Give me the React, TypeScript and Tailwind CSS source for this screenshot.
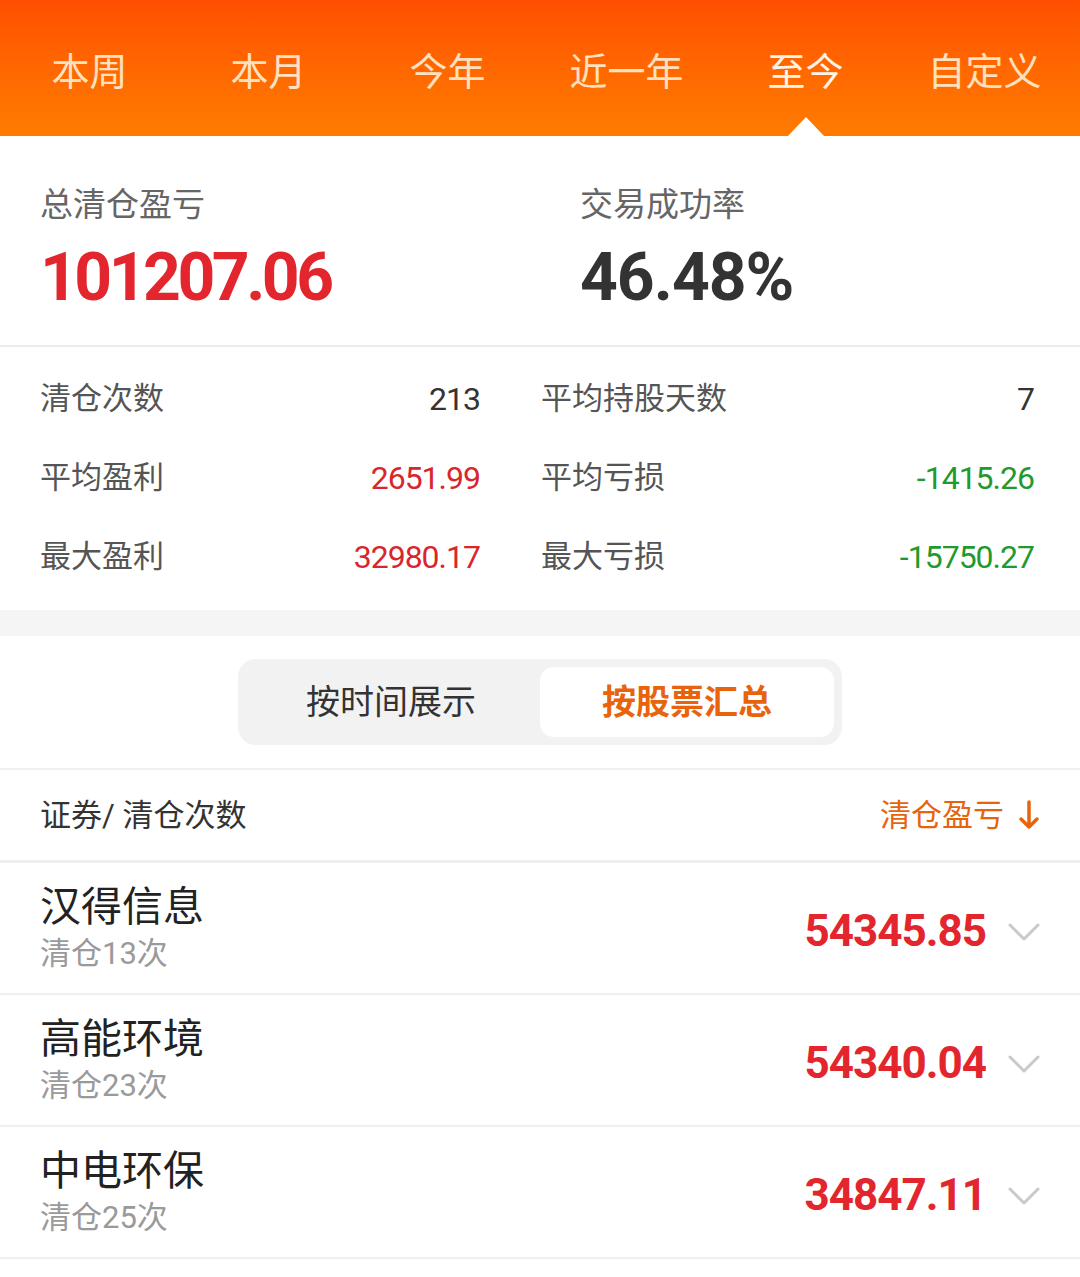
import React from "react";

const tabs = ["本周", "本月", "今年", "近一年", "至今", "自定义"];

const stats = [
  { l: "清仓次数", lv: "213", lc: "text-[#333333]", r: "平均持股天数", rv: "7", rc: "text-[#333333]" },
  { l: "平均盈利", lv: "2651.99", lc: "text-[#d9262c]", r: "平均亏损", rv: "-1415.26", rc: "text-[#1f9a2e]" },
  { l: "最大盈利", lv: "32980.17", lc: "text-[#d9262c]", r: "最大亏损", rv: "-15750.27", rc: "text-[#1f9a2e]" },
];

const stocks = [
  { name: "汉得信息", times: 13, value: "54345.85" },
  { name: "高能环境", times: 23, value: "54340.04" },
  { name: "中电环保", times: 25, value: "34847.11" },
];

const font = "font-['Roboto','Noto_Sans_CJK_SC',sans-serif]";

function Chevron() {
  return (
    <svg width="32" height="20" viewBox="0 0 32 20" fill="none">
      <path d="M2 3 L16 17 L30 3" stroke="#c9c9c9" strokeWidth="3" strokeLinecap="round" strokeLinejoin="round" />
    </svg>
  );
}

export default function App() {
  const [tab, setTab] = React.useState(4);
  const [mode, setMode] = React.useState(1);

  return (
    <div className={`w-[1080px] min-h-[1277px] bg-white ${font}`}>
      {/* period tabs */}
      <div className="h-[136px] bg-gradient-to-b from-[#ff4f00] to-[#ff7c00] grid grid-cols-6 pr-[6px]">
        {tabs.map((t, i) => (
          <button
            key={t}
            onClick={() => setTab(i)}
            className={`relative flex items-center justify-center pt-[8px] text-[38px] leading-none ${
              tab === i ? "text-[#fff4e6]" : "text-[#ffe0bf]"
            }`}
          >
            {t}
            {tab === i && (
              <span className="absolute bottom-0 left-1/2 -translate-x-1/2 w-0 h-0 border-l-[18px] border-r-[18px] border-b-[19px] border-l-transparent border-r-transparent border-b-white" />
            )}
          </button>
        ))}
      </div>

      {/* summary */}
      <div className="h-[211px] flex px-[40px] pt-[52px] border-b-[2px] border-[#ececec]">
        <div className="w-[540px] flex flex-col">
          <div className="text-[33px] leading-none text-[#666666]">总清仓盈亏</div>
          <div className="mt-[24px] text-[66px] leading-none font-bold tracking-[-3.5px] text-[#e3262d]">101207.06</div>
        </div>
        <div className="flex flex-col">
          <div className="text-[33px] leading-none text-[#666666]">交易成功率</div>
          <div className="mt-[24px] text-[66px] leading-none font-bold tracking-[-1px] text-[#333333]">46.48%</div>
        </div>
      </div>

      {/* stats */}
      <div className="pt-[12px] pb-[14px]">
        {stats.map((s) => (
          <div key={s.l} className="h-[79px] flex items-center px-[40px] text-[31px] leading-none">
            <div className="w-[440px] flex justify-between">
              <span className="text-[#555555]">{s.l}</span>
              <span className={`${s.lc} text-[32px] tracking-[-1px]`}>{s.lv}</span>
            </div>
            <div className="ml-[61px] flex-1 flex justify-between pr-[6px]">
              <span className="text-[#555555]">{s.r}</span>
              <span className={`${s.rc} text-[32px] tracking-[-1px]`}>{s.rv}</span>
            </div>
          </div>
        ))}
      </div>

      <div className="h-[26px] bg-[#f5f5f5]" />

      {/* segmented control */}
      <div className="h-[134px] flex items-center justify-center border-b-[2px] border-[#f0f0f0]">
        <div className="w-[604px] h-[86px] rounded-[18px] bg-[#f2f2f2] p-[8px] flex">
          <button
            onClick={() => setMode(0)}
            className={`flex-1 rounded-[14px] text-[34px] leading-none pr-[4px] ${mode === 0 ? "bg-white text-[#e8640c] font-bold" : "text-[#333333]"}`}
          >
            按时间展示
          </button>
          <button
            onClick={() => setMode(1)}
            className={`w-[294px] rounded-[14px] text-[34px] leading-none ${mode === 1 ? "bg-white text-[#e8640c] font-bold" : "text-[#333333]"}`}
          >
            按股票汇总
          </button>
        </div>
      </div>

      {/* list header */}
      <div className="h-[93px] flex items-center justify-between px-[40px] border-b-[3px] border-[#efefef]">
        <span className="text-[31px] leading-none text-[#333333]">证券/ 清仓次数</span>
        <span className="flex items-center gap-[14px] text-[31px] leading-none text-[#e8640c]">
          清仓盈亏
          <svg width="22" height="30" viewBox="0 0 22 30" fill="none">
            <path d="M11 2 V27 M3 19 L11 27 L19 19" stroke="#e8640c" strokeWidth="3.5" strokeLinecap="round" strokeLinejoin="round" />
          </svg>
        </span>
      </div>

      {/* stock rows */}
      {stocks.map((s) => (
        <div key={s.name} className="h-[132px] flex items-center px-[40px] border-b-[2px] border-[#f0f0f0]">
          <div className="flex-1 flex flex-col">
            <span className="text-[41px] leading-none text-[#222222]">{s.name}</span>
            <span className="mt-[10px] text-[31px] leading-none text-[#9a9a9a]">清仓{s.times}次</span>
          </div>
          <span className="mt-[6px] text-[44px] leading-none font-bold tracking-[-1px] text-[#e3262d]">{s.value}</span>
          <span className="ml-[22px] mt-[8px] flex items-center">
            <Chevron />
          </span>
        </div>
      ))}
    </div>
  );
}
